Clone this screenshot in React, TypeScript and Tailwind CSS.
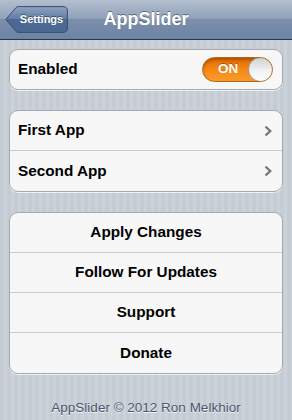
const font = { fontFamily: '"Liberation Sans", Arial, sans-serif' }

function BackButton() {
  return (
    <div className="relative w-[63px] h-[27px]">
      <svg width="63" height="27" viewBox="0 0 63 27" className="absolute inset-0">
        <defs>
          <linearGradient id="bb" x1="0" y1="0" x2="0" y2="1">
            <stop offset="0" stopColor="#8fa3c1" />
            <stop offset="0.5" stopColor="#5f7ba3" />
            <stop offset="0.5" stopColor="#4b6993" />
            <stop offset="1" stopColor="#4a6892" />
          </linearGradient>
        </defs>
        <path
          d="M0.8 13.5 L11 1.6 Q11.8 0.6 13.2 0.6 L58 0.6 Q62.4 0.6 62.4 5 L62.4 22 Q62.4 26.4 58 26.4 L13.2 26.4 Q11.8 26.4 11 25.4 Z"
          fill="url(#bb)"
          stroke="#3a4d6b"
          strokeWidth="1"
        />
      </svg>
      <span className="absolute inset-0 pl-[10px] flex items-center justify-center text-white font-bold text-[11px] [text-shadow:0_-1px_0_rgba(0,0,0,0.45)]">
        Settings
      </span>
    </div>
  )
}

function Toggle() {
  return (
    <div className="relative w-[71px] h-[25px] rounded-full border border-[#b0681a] bg-[linear-gradient(#e46a00,#f68b17_55%,#fb9a2b)] shadow-[inset_0_2px_3px_rgba(0,0,0,0.25)] overflow-hidden">
      <span className="absolute left-[15px] top-0 h-full flex items-center text-white font-bold text-[13.5px] [text-shadow:0_-1px_0_rgba(0,0,0,0.3)]">
        ON
      </span>
      <div className="absolute right-[-1px] top-[-1px] w-[25px] h-[25px] rounded-full border border-[#9c9c9c] bg-[linear-gradient(#d2d2d2,#f4f4f4_60%,#fbfbfb)]" />
    </div>
  )
}

function Chevron() {
  return (
    <svg width="7" height="10" viewBox="0 0 7 10" className="shrink-0">
      <path d="M1.3 1.3 L5.3 5 L1.3 8.7" fill="none" stroke="#7a7a7a" strokeWidth="2.3" strokeLinecap="square" />
    </svg>
  )
}

function Row({ label, last }: { label: string; last?: boolean }) {
  return (
    <div className={`h-[40px] flex items-center justify-between pl-[8px] pr-[10px] ${last ? '' : 'border-b border-[#cbcbcb]'}`}>
      <span className="text-[15.3px] font-bold text-black">{label}</span>
      <Chevron />
    </div>
  )
}

function ButtonRow({ label, last }: { label: string; last?: boolean }) {
  return (
    <div className={`h-[40px] flex items-center justify-center ${last ? '' : 'border-b border-[#cbcbcb]'}`}>
      <span className="text-[15.3px] font-bold text-black">{label}</span>
    </div>
  )
}

const card =
  'mx-[9px] rounded-[9px] border border-[#a6a9ad] bg-[#f7f7f7] overflow-hidden shadow-[0_1px_0_rgba(255,255,255,0.7)]'

export default function App() {
  return (
    <div
      style={font}
      className="w-[292px] h-[420px] overflow-hidden bg-[repeating-linear-gradient(90deg,#c5ccd4_0px,#c5ccd4_4px,#cbd2d9_4px,#cbd2d9_7px)]"
    >
      <header className="h-[40px] relative flex items-center px-[5px] bg-[linear-gradient(#b3bfcf,#8d9fb8_50%,#7b8fac_50%,#6d83a2)] border-b border-[#2d3748]">
        <BackButton />
        <span className="absolute left-1/2 -translate-x-1/2 text-white font-bold text-[18px] [text-shadow:0_-1px_0_rgba(0,0,0,0.4)]">
          AppSlider
        </span>
      </header>

      <div className={`${card} mt-[9px]`}>
        <div className="h-[39px] flex items-center justify-between pl-[8px] pr-[9px]">
          <span className="text-[15.3px] font-bold text-black">Enabled</span>
          <Toggle />
        </div>
      </div>

      <div className={`${card} mt-[20px]`}>
        <Row label="First App" />
        <Row label="Second App" last />
      </div>

      <div className={`${card} mt-[20px]`}>
        <ButtonRow label="Apply Changes" />
        <ButtonRow label="Follow For Updates" />
        <ButtonRow label="Support" />
        <ButtonRow label="Donate" last />
      </div>

      <p className="mt-[24px] text-center text-[13.5px] text-[#4c566c] [text-shadow:0_1px_0_rgba(255,255,255,0.8)]">
        AppSlider © 2012 Ron Melkhior
      </p>
    </div>
  )
}
